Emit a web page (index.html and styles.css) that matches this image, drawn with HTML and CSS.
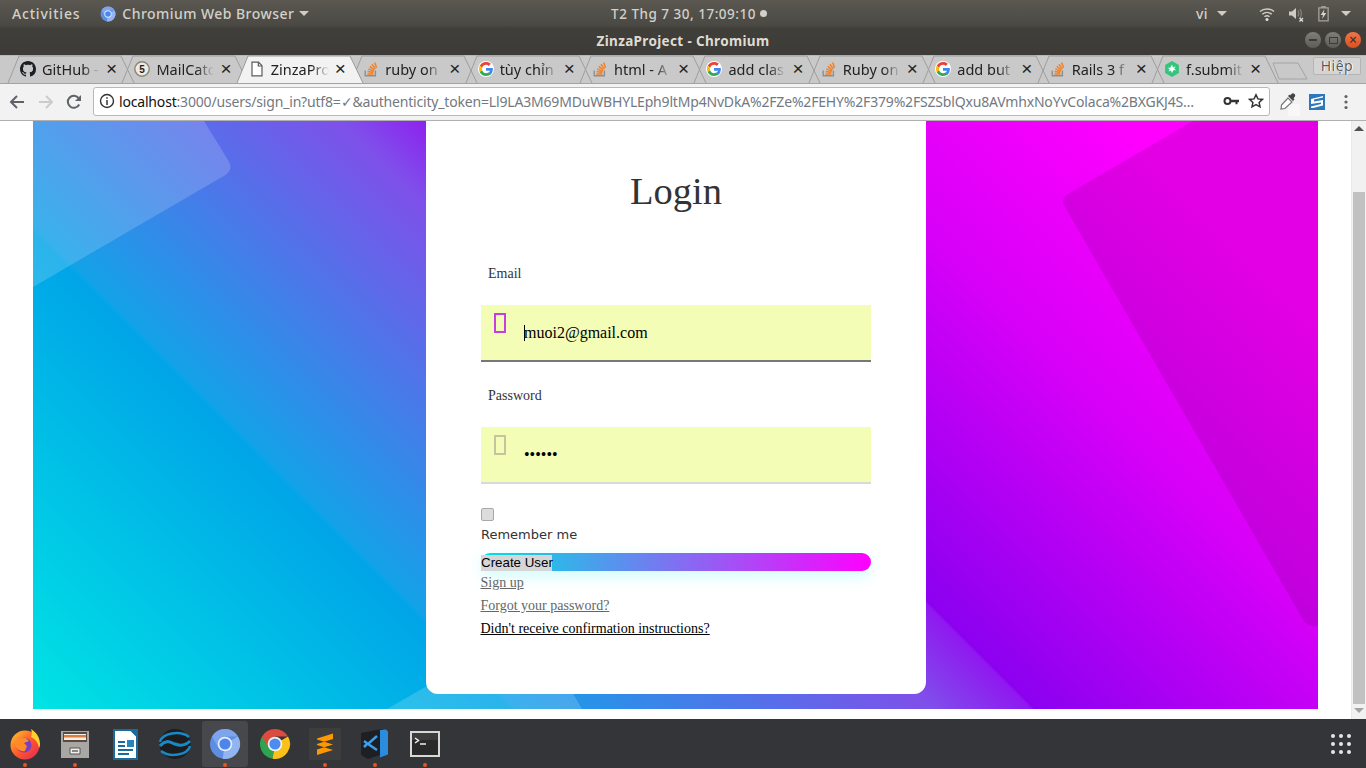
FILE: index.html
```html
<!DOCTYPE html>
<html lang="vi">
<head>
<meta charset="utf-8">
<title>ZinzaProject - Chromium</title>
<link rel="stylesheet" href="styles.css">
</head>
<body>
<svg class="sprite" aria-hidden="true">
  <symbol id="i-github" viewBox="0 0 16 16"><path fill="#1b1f23" d="M8 0C3.58 0 0 3.58 0 8c0 3.54 2.29 6.53 5.47 7.59.4.07.55-.17.55-.38 0-.19-.01-.82-.01-1.49-2.01.37-2.53-.49-2.69-.94-.09-.23-.48-.94-.82-1.13-.28-.15-.68-.52-.01-.53.63-.01 1.08.58 1.23.82.72 1.21 1.87.87 2.33.66.07-.52.28-.87.51-1.07-1.78-.2-3.64-.89-3.64-3.95 0-.87.31-1.59.82-2.15-.08-.2-.36-1.02.08-2.12 0 0 .67-.21 2.2.82.64-.18 1.32-.27 2-.27.68 0 1.36.09 2 .27 1.53-1.04 2.2-.82 2.2-.82.44 1.1.16 1.92.08 2.12.51.56.82 1.27.82 2.15 0 3.07-1.87 3.75-3.65 3.95.29.25.54.73.54 1.48 0 1.07-.01 1.93-.01 2.2 0 .21.15.46.55.38A8.013 8.013 0 0016 8c0-4.42-3.58-8-8-8z"/></symbol>
  <symbol id="i-doc" viewBox="0 0 16 16"><path fill="#fff" stroke="#5a5a5a" stroke-width="1.2" d="M3 1.2h6.5L13 4.8v10H3z"/><path fill="none" stroke="#5a5a5a" stroke-width="1.2" d="M9.3 1.2v3.8H13"/></symbol>
  <symbol id="i-so" viewBox="0 0 16 16"><path fill="none" stroke="#8a8f94" stroke-width="1.4" d="M2.2 9.5v5.3h10.2V9.5"/><path fill="none" stroke="#f48024" stroke-width="1.5" d="M4.4 12.9h6M4.6 10.4l5.8 1.2M5.3 7.9l5.4 2.5M6.8 5.4l4.6 3.8M8.9 3.2l3.5 4.7M11.6 1.4l2 5.4"/></symbol>
  <symbol id="i-google" viewBox="0 0 48 48"><circle cx="24" cy="24" r="24" fill="#fff"/><path fill="#EA4335" d="M24 11.5c3.2 0 6 1.1 8.3 3.2l6.2-6.2C34.700 5 29.800 3 24 3 15.800 3 8.700 7.700 5.300 14.600l7.200 5.600C14.200 15 18.700 11.500 24 11.500z"/><path fill="#4285F4" d="M44.500 24.700c0-1.500-.1-2.600-.4-3.700H24v7.900h11.500c-.5 2.700-2 5-4.400 6.600l7 5.400c4.100-3.800 6.400-9.400 6.400-16.200z"/><path fill="#FBBC05" d="M12.500 28.800c-.4-1.300-.7-2.600-.7-4.800s.3-3.500.7-4.800l-7.200-5.600C3.800 16.500 3 20.200 3 24s.8 7.500 2.300 10.400z"/><path fill="#34A853" d="M24 45c5.800 0 10.700-1.900 14.100-5.100l-7-5.400c-1.900 1.300-4.200 2.100-7.100 2.100-5.300 0-9.800-3.500-11.500-8.800l-7.200 5.600C8.700 40.300 15.800 45 24 45z"/></symbol>
  <symbol id="i-green" viewBox="0 0 16 16"><path fill="#34c47c" d="M8 0l6.900 4v8L8 16l-6.900-4V4z"/><path fill="#fff" d="M8 3.600l1 2.800 2.700-1.200-1.500 2.500 1.900 1.400-2.800.1L8 12.200l-1-2.600-2.400 1 1-2.400-2-1.500 2.700.1z"/></symbol>
  <symbol id="i-chromium" viewBox="0 0 32 32"><circle cx="16" cy="16" r="15" fill="#5c8ee3"/><path fill="#92b4f0" d="M16 16L29 8.500A15 15 0 0 1 13.500 30.800z"/><path fill="#7ea5ec" d="M9.500 19.800L3 8.500A15 15 0 0 1 29 8.500H16z"/><circle cx="16" cy="16" r="7.300" fill="#e4edfb"/><circle cx="16" cy="16" r="5.600" fill="#4c86ea"/></symbol>
  <symbol id="i-chrome" viewBox="0 0 32 32"><path fill="#2fa44f" d="M16 16L3 8.500A15 15 0 0 0 13.500 30.800z"/><path fill="#fbc118" d="M16 16L29 8.500A15 15 0 0 1 13.500 30.800z"/><path fill="#dd4b3e" d="M9.500 19.800L3 8.500A15 15 0 0 1 29 8.500H16z"/><circle cx="16" cy="16" r="7.300" fill="#f3f3f3"/><circle cx="16" cy="16" r="5.600" fill="#4d8bf0"/></symbol>
</svg>

<div class="desktop">
  <header class="chrome-top">
    <div class="panel">
      <div class="panel-left">
        <span class="panel-text panel-activities">Activities</span>
        <span class="app-menu">
          <svg class="panel-app-icon"><use href="#i-chromium"/></svg>
          <span class="panel-text">Chromium Web Browser</span>
          <span class="caret"></span>
        </span>
      </div>
      <div class="panel-clock">
        <span class="panel-text panel-time">T2 Thg 7 30, 17:09:10</span>
        <span class="clock-dot"></span>
      </div>
      <div class="panel-right">
        <span class="panel-text">vi</span>
        <span class="caret caret-lang"></span>
        <svg class="tray tray-wifi" viewBox="0 0 16 16"><path fill="none" stroke="#cfccc4" stroke-width="1.500" d="M1 5.500c4-3.500 10-3.500 14 0M3.300 8.200c2.700-2.300 6.700-2.300 9.400 0M5.500 10.800c1.400-1.200 3.600-1.200 5 0"/><circle cx="8" cy="13.500" r="1.500" fill="#e4e1da"/></svg>
        <svg class="tray tray-sound" viewBox="0 0 16 16"><path fill="#cfccc4" d="M1 5.500h3L8 2v11L4 9.500H1z"/><path fill="none" stroke="#86837b" stroke-width="1.200" d="M10 4.500c1 1.500 1 4.500 0 6M12 3c1.600 2.500 1.600 6.500 0 9"/><path stroke="#e4e1da" stroke-width="1.300" d="M11.500 12l3.500 3.500M15 12l-3.500 3.500"/></svg>
        <svg class="tray tray-batt" viewBox="0 0 14 18"><path fill="none" stroke="#a5a29a" stroke-width="1.400" d="M2 3h10v14H2z"/><path fill="#a5a29a" d="M4.500 1h5v2h-5z"/><path fill="#d8d5cd" d="M8 4.500L4 10.500h2.500L5.500 15l4.500-6.500H7.200z"/></svg>
        <span class="caret caret-sys"></span>
      </div>
    </div>
    <div class="titlebar">
      <span class="title-text">ZinzaProject - Chromium</span>
      <div class="win-buttons">
        <span class="win-btn"><span class="win-min"></span></span>
        <span class="win-btn"><span class="win-max"></span></span>
        <span class="win-btn win-close">×</span>
      </div>
    </div>
  </header>

  <nav class="tabstrip">
    <div class="tab"><svg class="tab-shape" viewBox="0 0 126 28"><path d="M0 28L11 1H113L126 28"/></svg><svg class="fav"><use href="#i-github"/></svg><span class="tab-title">GitHub -</span><span class="tab-x">×</span></div>
    <div class="tab"><svg class="tab-shape" viewBox="0 0 126 28"><path d="M0 28L11 1H113L126 28"/></svg><svg class="fav" viewBox="0 0 16 16"><circle cx="8" cy="8" r="7.200" fill="#efeae0" stroke="#8b8578" stroke-width="1.400"/><text x="8" y="11.600" text-anchor="middle" font-family="Liberation Sans, sans-serif" font-size="10" font-weight="700" fill="#222">5</text></svg><span class="tab-title">MailCatc</span><span class="tab-x">×</span></div>
    <div class="tab tab-active"><svg class="tab-shape" viewBox="0 0 126 28"><path d="M0 28L11 1H113L126 28"/></svg><svg class="fav"><use href="#i-doc"/></svg><span class="tab-title">ZinzaPro</span><span class="tab-x">×</span></div>
    <div class="tab"><svg class="tab-shape" viewBox="0 0 126 28"><path d="M0 28L11 1H113L126 28"/></svg><svg class="fav"><use href="#i-so"/></svg><span class="tab-title">ruby on</span><span class="tab-x">×</span></div>
    <div class="tab"><svg class="tab-shape" viewBox="0 0 126 28"><path d="M0 28L11 1H113L126 28"/></svg><svg class="fav"><use href="#i-google"/></svg><span class="tab-title">tùy chỉn</span><span class="tab-x">×</span></div>
    <div class="tab"><svg class="tab-shape" viewBox="0 0 126 28"><path d="M0 28L11 1H113L126 28"/></svg><svg class="fav"><use href="#i-so"/></svg><span class="tab-title">html - A</span><span class="tab-x">×</span></div>
    <div class="tab"><svg class="tab-shape" viewBox="0 0 126 28"><path d="M0 28L11 1H113L126 28"/></svg><svg class="fav"><use href="#i-google"/></svg><span class="tab-title">add clas</span><span class="tab-x">×</span></div>
    <div class="tab"><svg class="tab-shape" viewBox="0 0 126 28"><path d="M0 28L11 1H113L126 28"/></svg><svg class="fav"><use href="#i-so"/></svg><span class="tab-title">Ruby on</span><span class="tab-x">×</span></div>
    <div class="tab"><svg class="tab-shape" viewBox="0 0 126 28"><path d="M0 28L11 1H113L126 28"/></svg><svg class="fav"><use href="#i-google"/></svg><span class="tab-title">add but</span><span class="tab-x">×</span></div>
    <div class="tab"><svg class="tab-shape" viewBox="0 0 126 28"><path d="M0 28L11 1H113L126 28"/></svg><svg class="fav"><use href="#i-so"/></svg><span class="tab-title">Rails 3 f</span><span class="tab-x">×</span></div>
    <div class="tab"><svg class="tab-shape" viewBox="0 0 126 28"><path d="M0 28L11 1H113L126 28"/></svg><svg class="fav"><use href="#i-green"/></svg><span class="tab-title">f.submit</span><span class="tab-x">×</span></div>
    <svg class="newtab" viewBox="0 0 36 18"><path d="M1 1H26L35 17H7z"/></svg>
    <span class="profile">Hiệp</span>
  </nav>

  <div class="toolbar">
    <span class="tool"><svg viewBox="0 0 16 16"><path fill="none" stroke="#5f6368" stroke-width="2" d="M15 8H2.500M8 2L2 8l6 6"/></svg></span>
    <span class="tool"><svg viewBox="0 0 16 16"><path fill="none" stroke="#c9cbcd" stroke-width="2" d="M1 8h12.500M8 2l6 6-6 6"/></svg></span>
    <span class="tool"><svg viewBox="0 0 16 16"><path fill="none" stroke="#5f6368" stroke-width="2" d="M13.200 10.500A6 6 0 1 1 12.500 4"/><path fill="#5f6368" d="M15 1v6H9z"/></svg></span>
    <div class="omnibox">
      <svg class="info" viewBox="0 0 16 16"><circle cx="8" cy="8" r="6.500" fill="none" stroke="#333" stroke-width="1.400"/><path stroke="#333" stroke-width="1.500" d="M8 7v5M8 4.200v1.600"/></svg>
      <span class="url"><span class="url-host">localhost</span>:3000/users/sign_in?utf8=✓&amp;authenticity_token=Ll9LA3M69MDuWBHYLEph9ltMp4NvDkA%2FZe%2FEHY%2F379%2FSZSblQxu8AVmhxNoYvColaca%2BXGKJ4S…</span>
      <svg class="omni-icon" viewBox="0 0 16 16"><circle cx="4.500" cy="8" r="3" fill="none" stroke="#333" stroke-width="2"/><path fill="#333" d="M7.500 6.700H16v2.600h-1.500v2h-2v-2H7.500z"/></svg>
      <svg class="omni-icon" viewBox="0 0 16 16"><path fill="none" stroke="#333" stroke-width="1.500" d="M8 1.800l1.900 4.100 4.500.5-3.300 3 .9 4.400L8 11.600l-4 2.200.9-4.400-3.300-3 4.500-.5z"/></svg>
    </div>
    <span class="tool tool-right"><svg viewBox="0 0 18 18"><path fill="#444" d="M11 2.500l1.500-1.500a2 2 0 0 1 3 3L14.500 5.500l1 1-1.500 1.500-5-5 1.500-1.500z"/><path fill="#fff" stroke="#777" stroke-width="1.200" d="M9 5L2.500 12 2 16l4-.5L13 9z"/></svg></span>
    <span class="tool"><svg viewBox="0 0 16 16"><path fill="#2f77bd" d="M0 0h16v16H0z"/><path fill="#fff" d="M2 12.500L12 10V8.500L2 10V5L14 2v1.500L5 5.500v2L14 6v5.500L4 14H2z"/></svg></span>
    <span class="tool"><svg viewBox="0 0 16 16"><circle cx="8" cy="2.500" r="1.600" fill="#5f6368"/><circle cx="8" cy="8" r="1.600" fill="#5f6368"/><circle cx="8" cy="13.500" r="1.600" fill="#5f6368"/></svg></span>
  </div>

  <main class="page">
    <div class="viewport">
      <div class="wallpaper">
        <svg class="wall-shapes" viewBox="33 121 1285 588">
          <path class="shape-light" d="M33 287L222 177Q235 170 228 160L204 121H33z"/>
          <path class="shape-light" d="M387 709L533 625L582 709z"/>
          <path class="shape-dark" d="M1193 121L1068 194Q1060 199 1065 207L1302 618Q1307 628 1318 626V121z"/>
        </svg>
        <section class="card">
          <h1 class="card-title">Login</h1>
          <form class="login-form">
            <label class="field-label" for="email">Email</label>
            <div class="field field-focus">
              <span class="tofu"></span>
              <input class="field-input" id="email" type="email" value="muoi2@gmail.com" readonly>
              <span class="text-caret"></span>
            </div>
            <label class="field-label field-label-next" for="password">Password</label>
            <div class="field">
              <span class="tofu tofu-muted"></span>
              <input class="field-input" id="password" type="password" value="secret" readonly>
            </div>
            <input class="check" id="remember" type="checkbox">
            <label class="remember" for="remember">Remember me</label>
            <button class="submit" type="button"><span class="submit-text">Create User</span></button>
          </form>
          <div class="links">
            <a class="link link-muted" href="#">Sign up</a>
            <a class="link link-muted" href="#">Forgot your password?</a>
            <a class="link" href="#">Didn't receive confirmation instructions?</a>
          </div>
        </section>
      </div>
    </div>
    <div class="scrollbar">
      <span class="arrow-up"></span>
      <span class="thumb"></span>
      <span class="arrow-down"></span>
    </div>
  </main>

  <footer class="dock">
    <span class="dock-item running">
      <svg viewBox="0 0 32 32"><defs><linearGradient id="ff" x1="0" y1="0" x2="1" y2="1"><stop offset="0" stop-color="#ffcb2e"/><stop offset=".5" stop-color="#ff5a2a"/><stop offset="1" stop-color="#e0245e"/></linearGradient></defs><circle cx="16" cy="17" r="14.500" fill="url(#ff)"/><path fill="#ffd02e" d="M22 1c5 3 9 8 9 15 0 2-.5 3-1 4-1-6-4-9-8-11 1-3 1-5 0-8z"/><circle cx="15" cy="17" r="7.500" fill="#7a3fc4"/><path fill="#ff8a2a" d="M9 9l8 1 3 3-5 2 3 3-2 5c-3 1-8-1-10-6 1-3 2-6 3-8z"/></svg>
    </span>
    <span class="dock-item running">
      <svg viewBox="0 0 32 32"><path fill="#a9a7a3" d="M2 3h28v27H2z"/><path fill="#5a4a40" d="M4 4h24v10H4z"/><path fill="#f3f1ec" d="M5 6h22v6H5z"/><path fill="#e07b39" d="M5 7h22v2.500H5z"/><path fill="#eeeeec" stroke="#555" d="M11 20h10v6H11z"/><path fill="#888" d="M13 22h6v2h-6z"/></svg>
    </span>
    <span class="dock-item">
      <svg viewBox="0 0 32 32"><path fill="#fff" stroke="#1b6a9c" stroke-width="2" d="M5 2h17l6 6v23H5z"/><path fill="#1b6a9c" d="M20 1h9v9z"/><path fill="#1b6a9c" d="M9 13h7v2H9zM9 17h7v2H9zM9 21h15v2H9zM9 25h11v2H9z"/><path fill="#2b83bc" d="M18 12h7v7h-7z"/></svg>
    </span>
    <span class="dock-item">
      <svg viewBox="0 0 32 32"><ellipse cx="16" cy="16" rx="15.500" ry="15" fill="#1c1d1f"/><path fill="none" stroke="#1a88c4" stroke-width="2.500" d="M1 14c2-9 20-12 29-5M31 18c-2 9-20 12-29 5"/><path fill="none" stroke="#1a88c4" stroke-width="3" d="M1 18c6-7 10-4 15-2s10 2 15-3"/></svg>
    </span>
    <span class="dock-item dock-active running">
      <svg><use href="#i-chromium"/></svg>
    </span>
    <span class="dock-item">
      <svg><use href="#i-chrome"/></svg>
    </span>
    <span class="dock-item running">
      <svg viewBox="0 0 32 32"><rect width="32" height="32" rx="2" fill="#3d3d3d"/><path fill="#ff9800" d="M8 10.500L24 5.500v5.500L8 16zM24 16.500L8 11.500v5.500L24 22zM8 21.500l16-5v5.500l-16 5z"/></svg>
    </span>
    <span class="dock-item running">
      <svg viewBox="0 0 32 32"><path fill="#1d1f23" d="M2 5l21-4 4 2v22l-18 6-7-4z"/><path fill="#2b8bdc" d="M21 2l6-.500 2 2v23l-8 3z"/><path fill="none" stroke="#3aa0ee" stroke-width="2.500" d="M18 8l-9 8-4-3M18 22l-9-6M5 19l3-3"/></svg>
    </span>
    <span class="dock-item running">
      <svg viewBox="0 0 32 32"><path fill="#d8d8d6" d="M1 3h30v26H1z"/><path fill="#2a2a2a" d="M3 5h26v22H3z"/><path fill="#3c3c3c" d="M3 5h26v7H3z"/><path fill="none" stroke="#f0f0f0" stroke-width="1.500" d="M6 10l3.500 2.500L6 15"/><path stroke="#f0f0f0" stroke-width="1.500" d="M11 16h6"/></svg>
    </span>
    <svg class="dock-grid" viewBox="0 0 20 20"><g fill="#e6e6e6"><circle cx="2" cy="2" r="2"/><circle cx="10" cy="2" r="2"/><circle cx="18" cy="2" r="2"/><circle cx="2" cy="10" r="2"/><circle cx="10" cy="10" r="2"/><circle cx="18" cy="10" r="2"/><circle cx="2" cy="18" r="2"/><circle cx="10" cy="18" r="2"/><circle cx="18" cy="18" r="2"/></g></svg>
  </footer>
</div>
</body>
</html>
```

FILE: styles.css
```css
* { box-sizing: border-box; }
html, body { margin: 0; height: 100%; overflow: hidden; }
body { font-family: "Noto Sans", sans-serif; background: #fff; }
.sprite { position: absolute; width: 0; height: 0; }
.desktop { display: flex; flex-direction: column; width: 1366px; height: 768px; }

/* top panel + title bar */
.chrome-top { height: 55px; background: linear-gradient(#5a5850 0, #4b4944 25px, #403f3a 28px, #3c3b37 55px); flex: none; }
.panel { height: 27px; display: grid; grid-template-columns: 1fr auto 1fr; align-items: center; padding: 0 0 0 12px; }
.panel-left, .panel-right, .panel-clock, .app-menu { display: flex; align-items: center; }
.panel-text { font-size: 14px; line-height: 20px; font-weight: 500; color: #d3d0c8; letter-spacing: .45px; white-space: nowrap; }
.panel-activities { letter-spacing: .8px; }
.panel-time { font-size: 13.500px; letter-spacing: .5px; }
.app-menu { margin-left: 20px; }
.panel-app-icon { width: 16px; height: 16px; margin-right: 6px; }
.caret { width: 0; height: 0; border-left: 5px solid transparent; border-right: 5px solid transparent; border-top: 5px solid #cfccc4; margin-left: 5px; }
.clock-dot { width: 7px; height: 7px; border-radius: 50%; background: #d3d0c8; margin-left: 4px; }
.panel-right { justify-content: flex-end; }
.caret-lang { margin-left: 9px; margin-right: 32px; }
.tray { height: 16px; width: 16px; }
.tray-sound { margin-left: 13px; }
.tray-batt { margin-left: 13px; height: 17px; width: 13px; }
.caret-sys { margin-left: 11px; margin-right: 15px; }
.titlebar { height: 28px; position: relative; display: flex; align-items: center; justify-content: center; }
.title-text { font-size: 13.500px; font-weight: 700; color: #dfdbd2; letter-spacing: .35px; }
.win-buttons { position: absolute; right: 5px; top: 5px; display: flex; gap: 4px; }
.win-btn { width: 16px; height: 16px; border-radius: 50%; background: linear-gradient(#807e78, #5e5c56); display: flex; align-items: center; justify-content: center; }
.win-min { width: 8px; height: 2px; background: #3c3b37; }
.win-max { width: 9px; height: 7px; border: 1px solid #3c3b37; }
.win-close { background: linear-gradient(#f0764a, #d9501f); color: #41291f; font-size: 14px; line-height: 16px; }

/* tabs */
.tabstrip { height: 28px; flex: none; display: flex; background: #c9c9c9; border-top: 1px solid #b8b8b8; padding-left: 8px; position: relative; }
.tab { position: relative; flex: none; width: 126px; height: 28px; margin: -1px -11.600px 0 0; padding: 1px 18px 2px 12px; display: flex; align-items: center; gap: 6px; }
.tab-shape { position: absolute; left: 0; top: 0; width: 126px; height: 28px; overflow: visible; }
.tab-shape path { fill: none; stroke: #9e9e9e; stroke-width: 1; }
.tab-active { z-index: 2; }
.tab-active .tab-shape path { fill: #f2f2f2; stroke: #9a9a9a; }
.fav { position: relative; width: 16px; height: 16px; flex: none; }
.tab-title { position: relative; flex: 1; min-width: 0; font-size: 14.500px; color: #222; white-space: nowrap; overflow: hidden; -webkit-mask-image: linear-gradient(90deg, #000 70%, transparent 100%); mask-image: linear-gradient(90deg, #000 70%, transparent 100%); }
.tab-x { position: relative; flex: none; width: 10px; font-size: 19px; line-height: 20px; text-align: center; color: #222; font-family: "Liberation Sans", sans-serif; }
.newtab { flex: none; width: 36px; height: 18px; margin: 6px 0 0 5.500px; }
.newtab path { fill: #c9c9c9; stroke: #a4a4a4; }
.profile { flex: none; width: 48px; height: 18px; margin: 1px 0 0 5px; background: #d4d4d4; border: 1px solid #b5b5b5; border-radius: 2px; font-size: 14px; line-height: 15px; text-align: center; color: #5a5a5a; letter-spacing: .5px; text-shadow: 0 0 1px #fff, 1px 0 0 #fff; }

/* toolbar */
.toolbar { height: 38px; flex: none; display: flex; align-items: center; padding-left: 3px; background: #f2f2f2; border-top: 1px solid #a3a3a3; border-bottom: 1px solid #b0b0b0; position: relative; z-index: 1; }
.tool { flex: none; width: 28.500px; height: 28px; display: flex; align-items: center; justify-content: center; }
.tool svg { width: 16px; height: 16px; }
.tool-right { position: relative; margin-left: 2px; width: 31px; }
.tool-right svg { position: relative; width: 18px; height: 18px; }
.tool-right::before { content: ""; position: absolute; left: 16px; top: 16px; width: 12px; height: 12px; background: #f8f8f8; border-radius: 2px; }
.omnibox { flex: none; width: 1177px; height: 29px; margin-left: 4.500px; margin-top: -2px; display: flex; align-items: center; background: #fff; border: 1px solid #b9b9b9; border-radius: 3px; padding-left: 5px; }
.info { width: 16px; height: 16px; flex: none; }
.url { flex: none; width: 1095px; margin-left: 4px; font-size: 14px; letter-spacing: -.18px; color: #73797f; white-space: nowrap; overflow: hidden; }
.url-host { color: #111; }
.omni-icon { flex: none; width: 16px; height: 16px; margin-left: 9px; }

/* page */
.page { flex: 1; min-height: 0; display: flex; background: #fff; }
.viewport { flex: 1; min-width: 0; padding: 0 33px 10px; }
.wallpaper { position: relative; height: 588px; background: linear-gradient(45deg, #00e4e4 0, #00a5e8 25.400%, #14a2e8 25.900%, #7f50ea 47.900%, #9018f0 53.300%, #8c00f0 53.500%, #d800f8 73.500%, #ff00ff 89.700%, #ff00ff 100%); }
.wall-shapes { position: absolute; left: 0; top: 0; width: 100%; height: 100%; }
.shape-light { fill: #fff; fill-opacity: .17; }
.shape-dark { fill: #400040; fill-opacity: .14; }
.card { position: relative; width: 500px; height: 573px; margin-left: 393px; background: #fff; border-radius: 0 0 12px 12px; padding: 50px 55px 0; }
.card-title { margin: 0; height: 40px; font: 400 38.500px/40px "Liberation Serif", serif; color: #333; text-align: center; }
.login-form { display: flex; flex-direction: column; align-items: flex-start; margin-top: 53px; }
.field-label { display: block; height: 20px; padding-left: 7px; margin-bottom: 21px; font: 14px/20px "Liberation Serif", serif; color: #333; }
.field-label-next { margin-top: 24px; }
.field { position: relative; width: 390px; height: 57px; background: #f3fdb5; border-bottom: 2px solid #d9d9d9; }
.field-focus { border-bottom-color: #777; }
.field-input { display: block; width: 100%; height: 55px; padding: 0 0 0 43px; border: 0; outline: 0; background: transparent; font: 16px "Liberation Serif", serif; color: #000; }
.tofu { position: absolute; left: 13px; top: 8px; width: 12px; height: 20px; border: 2px solid #c63ee4; }
.tofu-muted { border-color: #c5c4a2; }
.text-caret { position: absolute; left: 43px; top: 20px; width: 1px; height: 16px; background: #000; }
.check { appearance: none; -webkit-appearance: none; display: block; width: 13px; height: 13px; margin: 24px 0 0; background: #dcdcdc; border: 1px solid #a8a8a8; border-radius: 2px; }
.remember { display: block; height: 18px; margin-top: 5px; font: 13px/18px "DejaVu Sans", sans-serif; color: #333; }
.submit { display: flex; align-items: flex-end; width: 390px; height: 18px; margin-top: 9px; padding: 0; border: 0; border-radius: 9px; background: linear-gradient(90deg, #00e0e4, #ff00ff); box-shadow: 0 5px 15px rgba(0, 235, 235, .2); font: 13.333px/16px "Liberation Sans", sans-serif; color: #000; }
.submit-text { display: block; height: 16px; width: 71px; white-space: nowrap; background: #d6d6d6; }
.links { display: flex; flex-direction: column; align-items: flex-start; margin-left: -.5px; }
.link { font: 14px/23px "Liberation Serif", serif; color: #000; text-decoration: underline; }
.link-muted { color: #666; }

/* scrollbar */
.scrollbar { position: relative; flex: none; width: 15px; background: #f1f1f1; border-left: 1px solid #e8e8e8; }
.thumb { position: absolute; left: 1px; top: 71px; width: 12px; height: 512px; background: #c1c1c1; }
.arrow-up, .arrow-down { position: absolute; left: 2px; width: 0; height: 0; border-left: 5px solid transparent; border-right: 5px solid transparent; }
.arrow-up { top: 5px; border-bottom: 5px solid #505050; }
.arrow-down { top: 587px; border-top: 5px solid #a3a3a3; }

/* dock */
.dock { position: relative; height: 49px; flex: none; display: flex; background: #333538; }
.dock-item { position: relative; flex: none; width: 50px; display: flex; align-items: center; justify-content: center; }
.dock-item svg { width: 32px; height: 32px; }
.dock-active::before { content: ""; position: absolute; left: 2px; right: 2px; top: 2px; bottom: 1px; border-radius: 3px; background: #46484b; }
.dock-active svg { position: relative; }
.running::after { content: ""; position: absolute; left: 23px; bottom: 1px; width: 4px; height: 4px; border-radius: 50%; background: #e95420; }
.dock-grid { width: 20px; height: 20px; margin: 15px 0 0 881px; flex: none; }
```
